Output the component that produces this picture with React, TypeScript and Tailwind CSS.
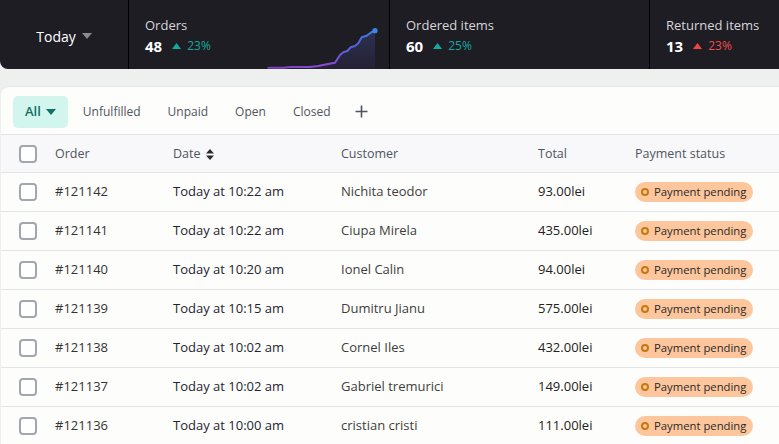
import React from 'react';

type Order = {
  id: string;
  date: string;
  customer: string;
  total: string;
};

const orders: Order[] = [
  { id: '#121142', date: 'Today at 10:22 am', customer: 'Nichita teodor', total: '93.00lei' },
  { id: '#121141', date: 'Today at 10:22 am', customer: 'Ciupa Mirela', total: '435.00lei' },
  { id: '#121140', date: 'Today at 10:20 am', customer: 'Ionel Calin', total: '94.00lei' },
  { id: '#121139', date: 'Today at 10:15 am', customer: 'Dumitru Jianu', total: '575.00lei' },
  { id: '#121138', date: 'Today at 10:02 am', customer: 'Cornel Iles', total: '432.00lei' },
  { id: '#121137', date: 'Today at 10:02 am', customer: 'Gabriel tremurici', total: '149.00lei' },
  { id: '#121136', date: 'Today at 10:00 am', customer: 'cristian cristi', total: '111.00lei' },
];

const tabs: string[] = ['Unfulfilled', 'Unpaid', 'Open', 'Closed'];

const cols = 'grid grid-cols-[54px_118px_168px_197px_97px_1fr] items-center';

function Caret({ className }: { className?: string }) {
  return (
    <svg width="10" height="6" viewBox="0 0 10 6" className={className}>
      <path d="M0 0 L10 0 L5 6 Z" fill="currentColor" />
    </svg>
  );
}

function UpTriangle({ className }: { className?: string }) {
  return (
    <svg width="9" height="6" viewBox="0 0 9 6" className={className}>
      <path d="M0 6 L4.5 0 L9 6 Z" fill="currentColor" />
    </svg>
  );
}

function Sparkline() {
  const pts =
    '2.3,41.7 17.3,41.7 24,41 44,41 52.3,40 60.7,38.3 69,36.7 74,29 77.3,26.3 81.3,25 84.7,21.3 89,20 92.3,17.3 95.7,11.3 100.7,9.7 105.7,6 109,4.7';
  return (
    <svg width="114" height="43" viewBox="0 0 114 43" className="mr-[9px] block">
      <defs>
        <linearGradient id="line" x1="0" y1="0" x2="1" y2="0">
          <stop offset="0" stopColor="#7b3fc0" />
          <stop offset="0.55" stopColor="#8b4bd6" />
          <stop offset="0.8" stopColor="#4e63d8" />
          <stop offset="1" stopColor="#3b82e6" />
        </linearGradient>
        <linearGradient id="fill" x1="0" y1="0" x2="0" y2="1">
          <stop offset="0" stopColor="#2d3558" stopOpacity="0.9" />
          <stop offset="1" stopColor="#2a2440" stopOpacity="0.6" />
        </linearGradient>
      </defs>
      <polygon points={`${pts} 109,43 2.3,43`} fill="url(#fill)" />
      <polyline
        points={pts}
        fill="none"
        stroke="url(#line)"
        strokeWidth="2"
        strokeLinejoin="round"
        strokeLinecap="round"
      />
      <circle cx="109" cy="4.7" r="2.6" fill="#3b86ea" />
    </svg>
  );
}

function Stat({
  label,
  value,
  pct,
  up,
  chart,
  className,
}: {
  label: string;
  value: string;
  pct: string;
  up: boolean;
  chart?: boolean;
  className?: string;
}) {
  return (
    <div className={`flex items-end justify-between border-l border-black ${className ?? ''}`}>
      <div className="self-start pl-4 pt-[15px]">
        <div className="text-[13px] leading-[20px] text-[#d6d6da]">{label}</div>
        <div className="mt-[1px] flex items-center">
          <span className="text-[15px] font-bold leading-[20px] text-white">{value}</span>
          <UpTriangle className={`ml-[10px] ${up ? 'text-[#14a99f]' : 'text-[#ef4444]'}`} />
          <span className={`ml-[6px] text-[12px] ${up ? 'text-[#14a99f]' : 'text-[#ef4b4b]'}`}>
            {pct}
          </span>
        </div>
      </div>
      {chart && <Sparkline />}
    </div>
  );
}

function Checkbox() {
  return <div className="ml-[18px] h-[18px] w-[18px] rounded-[4px] border-2 border-[#a2a6ae] bg-white" />;
}

function Badge() {
  return (
    <span className="inline-flex h-[20px] items-center rounded-full bg-[#fdc69c] pl-[6px] pr-[7px] text-[11.3px] text-[#2a2a2a]">
      <span className="mr-[5px] h-[8px] w-[8px] rounded-full border-2 border-[#c47a10]" />
      Payment pending
    </span>
  );
}

export default function App() {
  return (
    <div
      className="h-[444px] w-[779px] overflow-hidden bg-[#eef0ef]"
      style={{ fontFamily: '"Open Sans", "Noto Sans", sans-serif' }}
    >
      <div className="flex h-[69px] rounded-bl-[8px] bg-[#1e1d23]">
        <div className="flex w-[128px] items-center justify-center pt-[3px] text-[14px] text-white">
          Today
          <Caret className="ml-[6px] text-[#8a8a90]" />
        </div>
        <Stat label="Orders" value="48" pct="23%" up chart className="w-[261px]" />
        <Stat label="Ordered items" value="60" pct="25%" up className="w-[260px]" />
        <Stat label="Returned items" value="13" pct="23%" up={false} className="flex-1" />
      </div>

      <div className="ml-[1px] mt-[17px] h-[400px] rounded-tl-[8px] border-t border-[#e4e6e8] bg-[#fdfdfb]">
        <div className="flex h-[48px] items-center border-b border-[#e2e4e8] pl-[12px] pt-[2px]">
          <div className="flex h-[32px] items-center rounded-[5px] bg-[#d2f6ee] px-[12px] text-[13px] font-semibold text-[#0f7167]">
            All
            <Caret className="ml-[5px] text-[#0f7167]" />
          </div>
          <div className="ml-[15px] flex items-center gap-[27px] text-[12px] font-medium text-[#4f5561]">
            {tabs.map((t) => (
              <span key={t}>{t}</span>
            ))}
            <svg width="13" height="13" viewBox="0 0 13 13" className="ml-[-2px] text-[#4f5561]">
              <path d="M6.5 0.5 V12.5 M0.5 6.5 H12.5" stroke="currentColor" strokeWidth="1.6" />
            </svg>
          </div>
        </div>

        <div className={`${cols} h-[38px] border-b border-[#e2e4e8] bg-[#f8f8fa] pt-[1px] text-[12.5px] text-[#4f5561]`}>
          <Checkbox />
          <span>Order</span>
          <span className="flex items-center">
            Date
            <svg width="8" height="11" viewBox="0 0 8 11" className="ml-[5px] text-[#2a2a2a]">
              <path d="M0 4.5 L4 0 L8 4.5 Z M0 6.5 L8 6.5 L4 11 Z" fill="currentColor" />
            </svg>
          </span>
          <span>Customer</span>
          <span>Total</span>
          <span>Payment status</span>
        </div>

        {orders.map((o) => (
          <div key={o.id} className={`${cols} h-[39px] border-b border-[#e2e4e8] text-[13px]`}>
            <Checkbox />
            <span className="text-[#333]">{o.id}</span>
            <span className="text-[#1f2433]">{o.date}</span>
            <span className="text-[#3e3e3e]">{o.customer}</span>
            <span className="text-[#222]">{o.total}</span>
            <span>
              <Badge />
            </span>
          </div>
        ))}
      </div>
    </div>
  );
}
